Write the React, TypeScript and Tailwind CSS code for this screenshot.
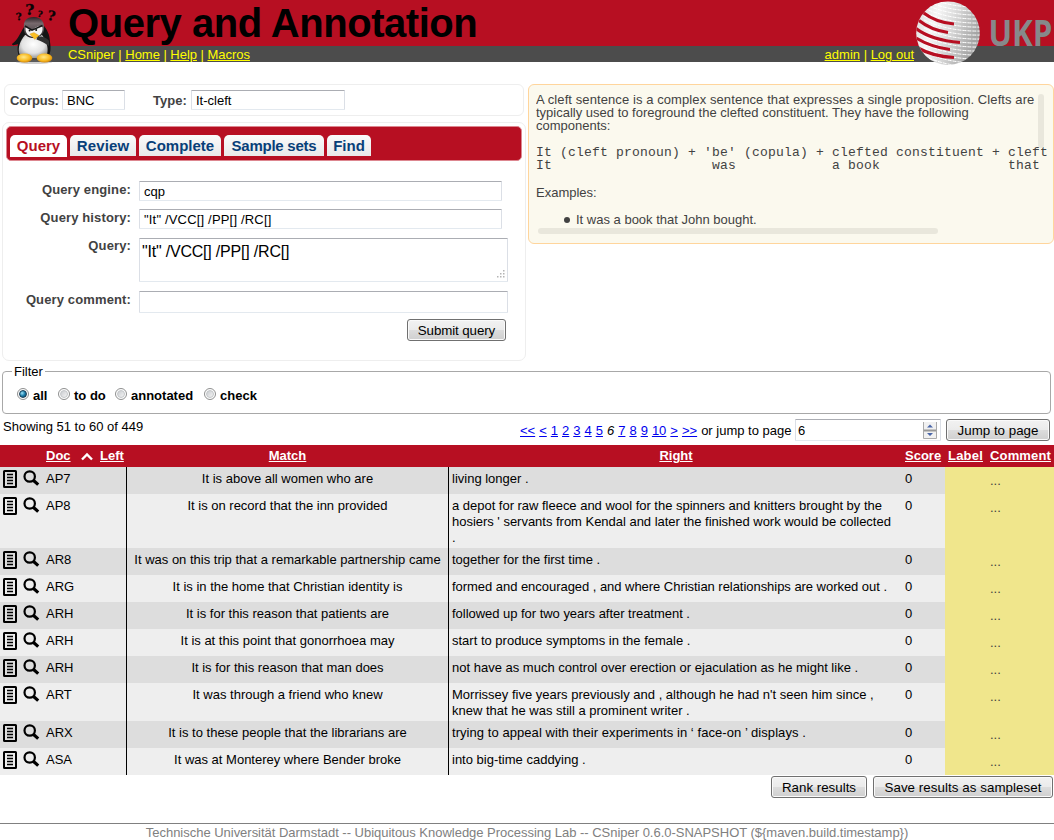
import React from "react";

const rows = [
  { doc: "AP7", match: "It is above all women who are", right: ["living longer ."], h: "h-[27px]", track: "" },
  {
    doc: "AP8",
    match: "It is on record that the inn provided",
    right: [
      "a depot for raw fleece and wool for the spinners and knitters brought by the",
      "hosiers ' servants from Kendal and later the finished work would be collected",
      ".",
    ],
    h: "h-[54px]",
    track: "tracking-[-0.02px]",
  },
  { doc: "AR8", match: "It was on this trip that a remarkable partnership came", right: ["together for the first time ."], h: "h-[27px]", track: "" },
  { doc: "ARG", match: "It is in the home that Christian identity is", right: ["formed and encouraged , and where Christian relationships are worked out ."], h: "h-[27px]", track: "tracking-[-0.04px]" },
  { doc: "ARH", match: "It is for this reason that patients are", right: ["followed up for two years after treatment ."], h: "h-[27px]", track: "tracking-[-0.03px]" },
  { doc: "ARH", match: "It is at this point that gonorrhoea may", right: ["start to produce symptoms in the female ."], h: "h-[27px]", track: "" },
  { doc: "ARH", match: "It is for this reason that man does", right: ["not have as much control over erection or ejaculation as he might like ."], h: "h-[27px]", track: "" },
  {
    doc: "ART",
    match: "It was through a friend who knew",
    right: ["Morrissey five years previously and , although he had n't seen him since ,", "knew that he was still a prominent writer ."],
    h: "h-[38px]",
    track: "",
  },
  { doc: "ARX", match: "It is to these people that the librarians are", right: ["trying to appeal with their experiments in ‘ face-on ’ displays ."], h: "h-[27px]", track: "tracking-[0.06px]" },
  { doc: "ASA", match: "It was at Monterey where Bender broke", right: ["into big-time caddying ."], h: "h-[27px]", track: "" },
];

const field = "border border-t-[#abadb3] border-x-[#dbdfe6] border-b-[#e3e9ef] rounded-[1px] bg-white text-black flex items-center";
const cols = "grid grid-cols-[46px_80px_323px_454px_42px_45px_64px]";

function Penguin() {
  return (
    <svg className="ml-[10px] block shrink-0" width="48" height="66" viewBox="10 0 48 66">
      <defs>
        <radialGradient id="belly" cx="0.5" cy="0.4" r="0.6">
          <stop offset="0" stopColor="#fff" />
          <stop offset="0.65" stopColor="#e2e2e2" />
          <stop offset="1" stopColor="#999" />
        </radialGradient>
        <radialGradient id="foot" cx="0.45" cy="0.4" r="0.65">
          <stop offset="0" stopColor="#ffe98a" />
          <stop offset="0.6" stopColor="#f8b921" />
          <stop offset="1" stopColor="#c77a05" />
        </radialGradient>
        <linearGradient id="head" x1="0" y1="0" x2="0" y2="1">
          <stop offset="0" stopColor="#2a2024" />
          <stop offset="0.3" stopColor="#77696d" />
          <stop offset="0.6" stopColor="#5c5356" />
          <stop offset="1" stopColor="#111" />
        </linearGradient>
      </defs>
      <g fill="#080405" stroke="#080405" strokeWidth="0.3" fontFamily="DejaVu Serif, serif" fontWeight="700">
        <text x="16" y="20" fontSize="10" transform="rotate(-8 19 16)">?</text>
        <text x="25.3" y="15.2" fontSize="15.5">?</text>
        <text x="37.5" y="17" fontSize="8.5" transform="rotate(12 40 14)">?</text>
        <text x="47.5" y="20.5" fontSize="13.5" transform="rotate(10 51 16)">?</text>
      </g>
      <ellipse cx="34" cy="62" rx="18" ry="2" fill="#777" opacity="0.35" />
      <path d="M24 27 C20 33 18 40 12 44 C12 46 15 45 18 44 C17 50 18 55 20 58 L47 58 C51 54 51 48 50 42 C50 35 47 29 43 25 Z" fill="#141414" />
      <path d="M25 35 C20 41 18 47 19 53 C22 59 45 60 47 54 C49 48 46 40 42 35 Z" fill="url(#belly)" />
      <path d="M24 29 C23 21 26 17 34 17 C41 17 45 22 44 30 C43 36 38 38 33 38 C27 38 24 34 24 29 Z" fill="url(#head)" />
      <path d="M25.5 28.5 C26 25 30 28 32 30.5 C34 27.5 41 24.5 42.5 27.5 C43 33 40 37 34 37 C28 37 25.5 33 25.5 28.5 Z" fill="#f3f3f3" />
      <path d="M25 26 L32 30.2 L42.5 25.5" fill="none" stroke="#151515" strokeWidth="1.6" />
      <circle cx="29.6" cy="30.6" r="1" fill="#111" />
      <circle cx="36.2" cy="30" r="1" fill="#111" />
      <path d="M29.8 34 L34 32.5 L39 35.5 L34.8 39.5 Z" fill="#fbbf24" stroke="#c6810b" strokeWidth="0.3" />
      <path d="M37 37.5 C41 35 47 38 49 41 L49 46 C45 43 41 41 36.5 39.5 Z" fill="#303030" />
      <ellipse cx="24.5" cy="58" rx="7.8" ry="4.5" fill="url(#foot)" />
      <ellipse cx="44.5" cy="58" rx="7.8" ry="4.5" fill="url(#foot)" />
    </svg>
  );
}

function Globe() {
  const meshLines = Array.from({ length: 18 }, (_, i) => i * 4 - 3);
  return (
    <svg className="block shrink-0" width="138" height="66" viewBox="0 0 138 66">
      <defs>
        <linearGradient id="sphere" x1="0" y1="0" x2="1" y2="0.35">
          <stop offset="0" stopColor="#d8d8d8" />
          <stop offset="0.35" stopColor="#f6f6f6" />
          <stop offset="0.6" stopColor="#dcdcdc" />
          <stop offset="1" stopColor="#a4a4a4" />
        </linearGradient>
        <clipPath id="disc">
          <circle cx="32" cy="33.2" r="31.8" />
        </clipPath>
      </defs>
      <circle cx="32" cy="33.2" r="31.8" fill="url(#sphere)" />
      <g clipPath="url(#disc)">
        <g fill="none" stroke="#fff" strokeWidth="1" strokeDasharray="4 1">
          {meshLines.map((y) => (
            <path key={y} d={`M8 ${y - 9} Q34 ${y + 3} 66 ${y + 2}`} />
          ))}
        </g>
        <g fill="none" stroke="#b70f22" strokeWidth="3.2">
          <path d="M7 12.5 Q20 22.5 38 24" />
          <path d="M3 20.5 Q15 30 32 32.5" />
          <path d="M0 28.5 Q15 40 44 42.5" />
          <path d="M0 38 Q15 47 34 49.5" />
          <path d="M2 48 Q17 56.5 38 57.5" />
        </g>
      </g>
      <text x="72.5" y="46" fontFamily="Open Sans, sans-serif" fontWeight="700" fontSize="36" fill="#86898b" textLength="64" lengthAdjust="spacingAndGlyphs">UKP</text>
    </svg>
  );
}

function DocIcon() {
  return (
    <svg width="14" height="18" viewBox="0 0 14 18" className="block">
      <rect x="1" y="1" width="12" height="16" rx="0.5" fill="none" stroke="#000" strokeWidth="2" />
      <path d="M4 4.5h6M4 7.5h6M4 10.5h6M4 13.5h6" stroke="#000" strokeWidth="1.5" />
    </svg>
  );
}

function SearchIcon() {
  return (
    <svg width="17" height="17" viewBox="0 0 17 17" className="block">
      <circle cx="6.7" cy="6.5" r="5.2" fill="none" stroke="#000" strokeWidth="2.2" />
      <path d="M10.3 10.3 L15.2 14.6" stroke="#000" strokeWidth="3.2" />
    </svg>
  );
}

function Button({ children, className }: { children: React.ReactNode; className: string }) {
  return (
    <button
      className={
        "flex h-[22px] shrink-0 items-center justify-center whitespace-nowrap rounded-[3px] border border-[#707070] bg-[linear-gradient(#f2f2f2,#ebebeb_48%,#dddddd_50%,#cfcfcf)] pt-[1px] text-[13.33px] leading-none text-black shadow-[inset_0_0_0_1px_#fafafa] " +
        className
      }
    >
      {children}
    </button>
  );
}

function Radio({ on, label, className }: { on?: boolean; label: string; className: string }) {
  return (
    <label className={"flex shrink-0 items-start " + className}>
      <span className="mr-[4px] flex h-[12px] w-[12px] items-center justify-center rounded-full border border-[#8e8f8f] bg-white">
        <span
          className={
            on
              ? "h-[8px] w-[8px] rounded-full border border-[#173a52] bg-[radial-gradient(circle_at_35%_35%,#9fe3f8,#1c7eab_50%,#0d3d5e)]"
              : "h-[8px] w-[8px] rounded-full border border-[#c3c6c9] bg-[linear-gradient(135deg,#c9ccd0,#f4f4f4)]"
          }
        />
      </span>
      <b className="whitespace-nowrap leading-4">{label}</b>
    </label>
  );
}

function Tab({ label, active, className }: { label: string; active?: boolean; className: string }) {
  return (
    <div
      className={
        "flex shrink-0 justify-center whitespace-nowrap rounded-t-[5px] text-[15px] font-bold leading-[21px] " +
        (active ? "h-[22px] bg-white text-[#b70f22] " : "h-[21px] bg-[linear-gradient(#fafafa,#e9e9e9)] text-[#083f79] ") +
        className
      }
    >
      {label}
    </div>
  );
}

function FormRow({ label, className, children }: { label: string; className: string; children?: React.ReactNode }) {
  return (
    <div className={"flex " + className}>
      <div className="w-[128px] shrink-0 whitespace-nowrap pt-[1px] text-right text-[13px] font-bold leading-4 tracking-[0.13px] text-[#424242]">{label}</div>
      <div className="ml-[8px]">{children}</div>
    </div>
  );
}

function Header() {
  return (
    <header className="flex h-[66px] bg-[linear-gradient(#b70f22_46px,#4c4c4c_46px,#4c4c4c_62px,#fff_62px)]">
      <Penguin />
      <div className="ml-[10px] w-[500px]">
        <h1 className="h-[46px] whitespace-nowrap text-[40px] font-bold leading-[47px] tracking-[-0.46px] text-black">Query and Annotation</h1>
        <nav className="whitespace-nowrap text-[13px] leading-[17px] tracking-[-0.03px] text-[#ff0]">
          CSniper | <u>Home</u> | <u>Help</u> | <u>Macros</u>
        </nav>
      </div>
      <nav className="ml-auto mr-[2px] mt-[46px] whitespace-nowrap text-[13px] leading-[17px] text-[#ff0]">
        <u>admin</u> | <u>Log out</u>
      </nav>
      <Globe />
    </header>
  );
}

function QueryPanel() {
  return (
    <section className="mt-[6px] ml-[2px] h-[239px] w-[524px] rounded-[7px] border border-[#eee] pt-[3px]">
      <div className="ml-[3px] flex h-[35px] w-[516px] items-start gap-[3px] rounded-[5px] border border-[#dd8790] bg-[#b70f22] pl-[3px] pt-[8px]">
        <Tab active label="Query" className="w-[57px]" />
        <Tab label="Review" className="w-[66px] tracking-[0.15px]" />
        <Tab label="Complete" className="w-[82px]" />
        <Tab label="Sample sets" className="w-[100px] tracking-[-0.25px]" />
        <Tab label="Find" className="w-[44px]" />
      </div>
      <div className="pt-[20px]">
        <FormRow label="Query engine:" className="h-[28px]">
          <div className={field + " h-[20px] w-[363px] pl-[4px] pt-[1px] text-[13px]"}>cqp</div>
        </FormRow>
        <FormRow label="Query history:" className="h-[28px]">
          <div className={field + " h-[20px] w-[363px] pl-[4px] pt-[1px] text-[13px] tracking-[0.18px]"}>"It" /VCC[] /PP[] /RC[]</div>
        </FormRow>
        <FormRow label="Query:" className="h-[54px]">
          <div className={field + " mt-[1px] h-[44px] w-[369px] justify-between pl-[2px] text-[16px]"}>
            <span className="mb-[16px] leading-5 tracking-[-0.2px]">"It" /VCC[] /PP[] /RC[]</span>
            <svg className="mr-[2px] self-end mb-[2px]" width="9" height="9" viewBox="0 0 9 9" fill="#b4b4b4">
              <path d="M7 0h1.5v1.5H7zM4 3h1.5v1.5H4zM7 3h1.5v1.5H7zM1 6h1.5v1.5H1zM4 6h1.5v1.5H4zM7 6h1.5v1.5H7z" />
            </svg>
          </div>
        </FormRow>
        <FormRow label="Query comment:" className="h-[28px]">
          <div className={field + " h-[22px] w-[369px]"} />
        </FormRow>
        <Button className="ml-[404px] w-[99px] tracking-[-0.1px]">Submit query</Button>
      </div>
    </section>
  );
}

function HelpPanel() {
  return (
    <aside className="relative ml-[2px] h-[160px] w-[526px] rounded-[6px] border border-[#ffd59c] bg-[#fbf9ee] pl-[7px] pt-[8px] text-[13px] leading-[13px] text-[#424242]">
      <div className="w-[511px] overflow-hidden whitespace-nowrap pb-[3px]">
        <p className="tracking-[0.09px]">A cleft sentence is a complex sentence that expresses a single proposition. Clefts are</p>
        <p>typically used to foreground the clefted constituent. They have the following</p>
        <p>components:</p>
        <pre className="mt-[14px] overflow-hidden font-['Liberation_Mono',monospace] text-[13px] leading-[13px] tracking-[0.2px]">
          {"It (cleft pronoun) + 'be' (copula) + clefted constituent + cleft\nIt                    was            a book                that"}
        </pre>
        <p className="mt-[14px]">Examples:</p>
        <div className="mt-[14px] flex items-center">
          <span className="ml-[28px] mr-[6px] h-[6px] w-[6px] rounded-full bg-[#424242]" />
          It was a book that John bought.
        </div>
      </div>
      <span className="absolute left-[509px] top-[9px] h-[54px] w-[6px] rounded-[3px] bg-[#e9e7dc]" />
      <span className="absolute left-[9px] top-[143px] h-[6px] w-[400px] rounded-[3px] bg-[#e9e7dc]" />
    </aside>
  );
}

function Pager() {
  const link = "text-[#0000ee] underline";
  return (
    <div className="flex h-[31px] shrink-0 items-start pl-[3px]">
      <div className="w-[517px] pt-[5px] leading-4">Showing 51 to 60 of 449</div>
      <div className="flex gap-[4px] whitespace-nowrap pt-[9px] leading-4">
        <span className={link}>&lt;&lt;</span>
        <span className={link}>&lt;</span>
        {["1", "2", "3", "4", "5"].map((n) => <span key={n} className={link}>{n}</span>)}
        <i>6</i>
        {["7", "8", "9", "10"].map((n) => <span key={n} className={link}>{n}</span>)}
        <span className={link}>&gt;</span>
        <span className={link}>&gt;&gt;</span>
        <span>or jump to page</span>
      </div>
      <div className={field + " ml-auto mt-[5px] h-[22px] w-[146px] justify-between pl-[2px] pr-[3px]"}>
        <span className="pt-[1px]">6</span>
        <svg width="14" height="17" viewBox="0 0 14 17">
          <path d="M.5 0v16.5h13V0" fill="#f1f1f1" stroke="#aaa" />
          <path d="M1 8.5h12" stroke="#999" strokeWidth="2" />
          <path d="M4 5.5h6L7 2.5zM4 11h6l-3 3z" fill="#4a66a8" />
        </svg>
      </div>
      <Button className="ml-[5px] mr-[4px] mt-[5px] w-[104px]">Jump to page</Button>
    </div>
  );
}

function Results() {
  return (
    <div className="shrink-0">
      <div className={cols + " h-[22px] whitespace-nowrap bg-[#b70f22] pt-[3px] font-bold leading-4 text-white"}>
        <span />
        <span className="flex">
          <u className="w-[34px]">Doc</u>
          <svg className="mt-[4px] w-[14px]" width="14" height="9" viewBox="0 0 14 9">
            <path d="M2 7.5 7 2.5 12 7.5" fill="none" stroke="#fff" strokeWidth="2.4" />
          </svg>
          <u className="ml-[6px]">Left</u>
        </span>
        <u className="text-center">Match</u>
        <u className="text-center">Right</u>
        <u className="pl-[2px]">Score</u>
        <u className="pl-[3px] tracking-[0.2px]">Label</u>
        <u className="tracking-[0.15px]">Comment</u>
      </div>
      {rows.map((row, i) => (
        <div key={i} className={cols + " whitespace-nowrap leading-4 " + row.h + (i % 2 ? " bg-[#eeeeee]" : " bg-[#dddddd]")}>
          <span className="flex gap-[6px] pl-[3px] pt-[3px]">
            <DocIcon />
            <SearchIcon />
          </span>
          <span className="pt-[4px]">{row.doc}</span>
          <span className="border-x border-black pt-[4px] text-center">{row.match}</span>
          <span className={"pl-[3px] pt-[4px] " + row.track}>
            {row.right.map((line) => <span key={line} className="block">{line}</span>)}
          </span>
          <span className="pl-[2px] pt-[4px]">0</span>
          <span className="bg-[#f0e68c]" />
          <span className="bg-[#f0e68c] pt-[6px] text-[#424242]">...</span>
        </div>
      ))}
    </div>
  );
}

export default function App() {
  return (
    <div className="flex h-[840px] w-[1054px] flex-col overflow-hidden bg-white font-['Liberation_Sans',Arial,sans-serif] text-[13px] text-black">
      <Header />
      <div className="mt-[18px] flex h-[277px] items-start">
        <div className="w-[526px] shrink-0">
          <div className="ml-[4px] flex h-[32px] w-[520px] rounded-[6px] border border-[#eee] pl-[5px] pt-[5px]">
            <b className="mt-[3px] w-[52px] leading-4 tracking-[-0.15px] text-[#424242]">Corpus:</b>
            <div className={field + " h-[20px] w-[63px] pl-[4px] pt-[1px]"}>BNC</div>
            <b className="ml-[28px] mt-[3px] w-[38px] leading-4 text-[#424242]">Type:</b>
            <div className={field + " h-[20px] w-[154px] pl-[4px] pt-[1px]"}>It-cleft</div>
          </div>
          <QueryPanel />
        </div>
        <HelpPanel />
      </div>
      <fieldset className="ml-[2px] mt-[2px] h-[51px] w-[1049px] shrink-0 rounded-[4px] border border-[#a8a8a8]">
        <legend className="ml-[9px] px-[2px] leading-[17px]">Filter</legend>
        <div className="flex pl-[14px] pt-[8px]">
          <Radio on label="all" className="w-[41px]" />
          <Radio label="to do" className="w-[57px]" />
          <Radio label="annotated" className="w-[89px]" />
          <Radio label="check" className="w-[60px]" />
        </div>
      </fieldset>
      <Pager />
      <Results />
      <div className="mt-[1px] flex justify-end gap-[6px] pr-[1px]">
        <Button className="w-[96px]">Rank results</Button>
        <Button className="w-[180px] tracking-[0.06px]">Save results as sampleset</Button>
      </div>
      <footer className="mt-[25px] h-[17px] border-t border-[#808080] text-center leading-[17px] tracking-[-0.02px] text-[#808080]">
        Technische Universität Darmstadt -- Ubiquitous Knowledge Processing Lab -- CSniper 0.6.0-SNAPSHOT ($&#123;maven.build.timestamp&#125;)
      </footer>
    </div>
  );
}
